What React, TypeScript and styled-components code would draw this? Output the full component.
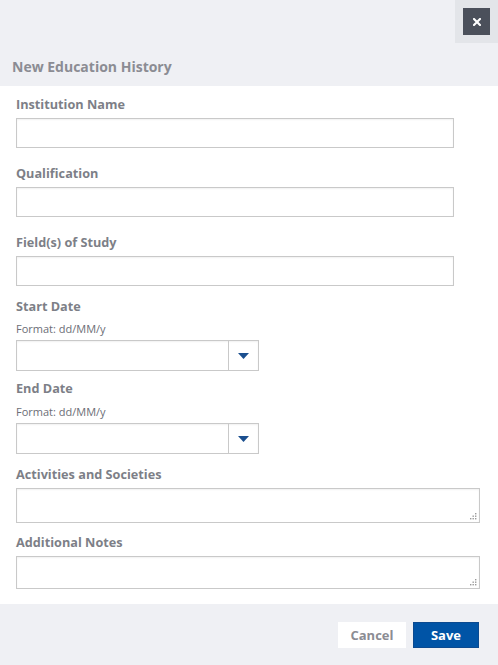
import React from "react";
import styled, { createGlobalStyle } from "styled-components";

const Global = createGlobalStyle`
  html, body { margin: 0; padding: 0; }
  body { font-family: "Open Sans", "Liberation Sans", sans-serif; background: #eff0f4; }
  * { box-sizing: border-box; }
`;

const Page = styled.div`
  width: 498px;
  height: 665px;
  background: #eff0f4;
  display: flex;
  flex-direction: column;
`;

const TopBar = styled.div`
  height: 43px;
  display: flex;
  justify-content: flex-end;
`;

const CloseArea = styled.div`
  width: 43px;
  height: 43px;
  background: #e3e5e9;
  padding: 8px 0 0 8px;
`;

const CloseButton = styled.button`
  width: 27px;
  height: 27px;
  border: none;
  background: #4b505b;
  padding: 0;
  display: flex;
  align-items: center;
  justify-content: center;
`;

const Title = styled.h2`
  margin: 0;
  height: 43px;
  padding: 14px 12px 0;
  font-size: 14px;
  line-height: 20px;
  font-weight: 700;
  color: #8b8c93;
`;

const Body = styled.div`
  background: #fff;
  padding: 8px 16px 0;
  height: 518px;
`;

const Field = styled.div<{ $gap: number }>`
  margin-bottom: ${(p) => p.$gap}px;
`;

const Label = styled.label<{ $mb?: number }>`
  display: block;
  font-size: 12.7px;
  line-height: 20px;
  font-weight: 700;
  color: #7d7f87;
  margin-bottom: ${(p) => (p.$mb ?? 4)}px;
`;

const Hint = styled.div`
  font-size: 11px;
  line-height: 16px;
  color: #6c6e76;
  margin-bottom: 3px;
`;

const TextInput = styled.input`
  display: block;
  width: 438px;
  height: 30px;
  border: 1px solid #c9c9c9;
  box-shadow: inset 0 1px 2px rgba(0, 0, 0, 0.06);
  outline: none;
  padding: 4px 8px;
  font-family: inherit;
  font-size: 13px;
`;

const DateBox = styled.div`
  display: flex;
  width: 243px;
  height: 31px;
  border: 1px solid #c9c9c9;
  box-shadow: inset 0 1px 2px rgba(0, 0, 0, 0.06);
`;

const DateInput = styled.input`
  flex: 1;
  min-width: 0;
  border: none;
  outline: none;
  background: transparent;
  font-family: inherit;
  font-size: 13px;
`;

const DropButton = styled.div`
  width: 30px;
  border-left: 1px solid #c9c9c9;
  display: flex;
  align-items: center;
  justify-content: center;
`;

const AreaWrap = styled.div`
  position: relative;
  width: 464px;
`;

const TextArea = styled.textarea<{ $h: number }>`
  display: block;
  width: 464px;
  height: ${(p) => p.$h}px;
  border: 1px solid #c9c9c9;
  box-shadow: inset 0 1px 2px rgba(0, 0, 0, 0.06);
  outline: none;
  resize: none;
  font-family: inherit;
  font-size: 13px;
`;

const Grip = styled.svg`
  position: absolute;
  right: 3px;
  bottom: 3px;
`;

const Footer = styled.div`
  flex: 1;
  display: flex;
  justify-content: flex-end;
  align-items: flex-start;
  gap: 7px;
  padding: 18px 19px 0 0;
`;

const Button = styled.button<{ $primary?: boolean; $w: number }>`
  height: 26px;
  width: ${(p) => p.$w}px;
  padding: 0;
  border: 1px solid ${(p) => (p.$primary ? "#0b4a90" : "#fff")};
  background: ${(p) => (p.$primary ? "#0054a6" : "#fff")};
  color: ${(p) => (p.$primary ? "#fff" : "#8b8c93")};
  font-family: "Open Sans", sans-serif;
  font-weight: 700;
  font-size: 13px;
  line-height: 24px;
`;

const Caret = () => (
  <svg width="11" height="6" viewBox="0 0 11 6">
    <path d="M0 0 H11 L5.5 6 Z" fill="#1b4f8f" />
  </svg>
);

const CrossIcon = () => (
  <svg width="8" height="8" viewBox="0 0 8 8">
    <path d="M1 1 L7 7 M7 1 L1 7" stroke="#fff" strokeWidth="2.1" strokeLinecap="square" />
  </svg>
);

const GripDots = () => (
  <Grip width="7" height="7" viewBox="0 0 7 7">
    <rect x="5" y="0" width="1.4" height="1.4" fill="#9a9a9a" />
    <rect x="2.5" y="2.5" width="1.4" height="1.4" fill="#9a9a9a" />
    <rect x="5" y="2.5" width="1.4" height="1.4" fill="#9a9a9a" />
    <rect x="0" y="5" width="1.4" height="1.4" fill="#9a9a9a" />
    <rect x="2.5" y="5" width="1.4" height="1.4" fill="#9a9a9a" />
    <rect x="5" y="5" width="1.4" height="1.4" fill="#9a9a9a" />
  </Grip>
);

export default function App() {
  return (
    <>
      <Global />
      <Page>
        <TopBar>
          <CloseArea>
            <CloseButton aria-label="Close">
              <CrossIcon />
            </CloseButton>
          </CloseArea>
        </TopBar>
        <Title>New Education History</Title>
        <Body>
          <Field $gap={15}>
            <Label>Institution Name</Label>
            <TextInput />
          </Field>
          <Field $gap={15}>
            <Label>Qualification</Label>
            <TextInput />
          </Field>
          <Field $gap={10}>
            <Label>Field(s) of Study</Label>
            <TextInput />
          </Field>
          <Field $gap={7}>
            <Label $mb={5}>Start Date</Label>
            <Hint>Format: dd/MM/y</Hint>
            <DateBox>
              <DateInput />
              <DropButton>
                <Caret />
              </DropButton>
            </DateBox>
          </Field>
          <Field $gap={10}>
            <Label $mb={6}>End Date</Label>
            <Hint>Format: dd/MM/y</Hint>
            <DateBox>
              <DateInput />
              <DropButton>
                <Caret />
              </DropButton>
            </DateBox>
          </Field>
          <Field $gap={9}>
            <Label>Activities and Societies</Label>
            <AreaWrap>
              <TextArea $h={35} />
              <GripDots />
            </AreaWrap>
          </Field>
          <Field $gap={0}>
            <Label>Additional Notes</Label>
            <AreaWrap>
              <TextArea $h={33} />
              <GripDots />
            </AreaWrap>
          </Field>
        </Body>
        <Footer>
          <Button $w={68}>Cancel</Button>
          <Button $primary $w={66}>Save</Button>
        </Footer>
      </Page>
    </>
  );
}
